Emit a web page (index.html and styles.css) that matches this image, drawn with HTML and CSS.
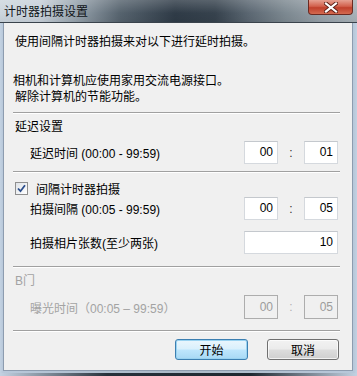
FILE: index.html
```html
<!DOCTYPE html>
<html lang="zh-CN">
<head>
<meta charset="utf-8">
<title>计时器拍摄设置</title>
<link rel="stylesheet" href="styles.css">
</head>
<body>
<div class="window">
  <div class="titlebar">
    <span class="title">计时器拍摄设置</span>
    <div class="close">
      <svg width="14" height="11" viewBox="0 0 14 11">
        <path d="M2 1.5 L12 9.5 M12 1.5 L2 9.5" stroke="#5a1e16" stroke-width="4" stroke-linecap="square"/>
        <path d="M2 1.5 L12 9.5 M12 1.5 L2 9.5" stroke="#ffffff" stroke-width="2.2" stroke-linecap="square"/>
      </svg>
    </div>
  </div>
  <div class="panel">
    <p class="line l1">使用间隔计时器拍摄来对以下进行延时拍摄。</p>
    <p class="line l2">相机和计算机应使用家用交流电源接口。</p>
    <p class="line l3">解除计算机的节能功能。</p>
    <div class="sep s1"></div>
    <p class="line group g1">延迟设置</p>
    <div class="row r1">
      <span class="label">延迟时间 (00:00 - 99:59)</span>
      <div class="pair">
        <span class="box">00</span><span class="colon">:</span><span class="box">01</span>
      </div>
    </div>
    <div class="sep s2"></div>
    <label class="check">
      <span class="cb">
        <svg width="9" height="9" viewBox="0 0 9 9"><path d="M1 4.5 L3.5 7.2 L8 1.2" fill="none" stroke="#2b4e8c" stroke-width="1.8"/></svg>
      </span>
      <span>间隔计时器拍摄</span>
    </label>
    <div class="row r2">
      <span class="label">拍摄间隔 (00:05 - 99:59)</span>
      <div class="pair">
        <span class="box">00</span><span class="colon">:</span><span class="box">05</span>
      </div>
    </div>
    <div class="row r3">
      <span class="label">拍摄相片张数(至少两张)</span>
      <span class="box wide">10</span>
    </div>
    <div class="sep s3"></div>
    <p class="line group g2 disabled">B门</p>
    <div class="row r4 disabled">
      <span class="label">曝光时间（00:05 – 99:59）</span>
      <div class="pair">
        <span class="box off">00</span><span class="colon">:</span><span class="box off">05</span>
      </div>
    </div>
    <div class="sep s4"></div>
    <div class="buttons">
      <button class="btn default">开始</button>
      <button class="btn">取消</button>
    </div>
  </div>
  <div class="shadow"></div>
</div>
</body>
</html>
```
FILE: styles.css
```css
html, body {
  margin: 0;
  padding: 0;
}
body {
  width: 357px;
  height: 376px;
  overflow: hidden;
  font-family: "Liberation Sans", "Noto Sans CJK SC", sans-serif;
  font-size: 12px;
  color: #000;
  background: #2c3540;
}
.window {
  width: 357px;
  height: 376px;
  display: flex;
  flex-direction: column;
  background: linear-gradient(90deg, #c3d2e2 0, #b8c8da 3px, #aab8c6 50%, #b8c8da calc(100% - 3px), #c3d2e2 100%);
}
.titlebar {
  height: 22px;
  flex: none;
  display: flex;
  justify-content: space-between;
  align-items: flex-start;
  background:
    linear-gradient(180deg, rgba(255,255,255,0.18) 0, rgba(255,255,255,0) 60%, rgba(0,0,0,0.05) 100%),
    linear-gradient(90deg, #cdd6de 0, #c7d0d9 40px, #98a4ae 75px, #56636e 120px, #2f3b47 175px, #36424d 215px, #5c6873 250px, #7c8890 285px, #96a0a8 320px, #a9b2b9 357px);
  border-bottom: 1px solid #3a434c;
}
.title {
  padding: 4px 0 0 4px;
  line-height: 14px;
  font-family: "Noto Sans CJK SC", sans-serif;
  font-size: 12px;
  color: #101418;
}
.close {
  width: 45px;
  height: 15px;
  margin-right: 4px;
  box-sizing: border-box;
  border: 1px solid #6b2a22;
  border-top: none;
  border-radius: 0 0 4px 4px;
  background: linear-gradient(180deg, #e6a192 0, #d2614d 45%, #c0402c 55%, #d46a50 100%);
  display: flex;
  align-items: center;
  justify-content: center;
}
.panel {
  flex: none;
  height: 348px;
  margin: 0 4px 0 3px;
  box-sizing: border-box;
  border: 1px solid #8d9caf;
  border-top: none;
  background: #f0f0f0;
  display: flex;
  flex-direction: column;
}
.shadow {
  flex: 1;
  margin-top: 2px;
  background: linear-gradient(90deg, #c3d2e2 0, #27313b 30%, #1e2730 70%, #c3d2e2 100%);
}
.line {
  margin: 0;
  height: 16px;
  line-height: 16px;
  white-space: nowrap;
}
.l1 { margin-top: 11px; padding-left: 11px; }
.l2 { margin-top: 23px; padding-left: 9px; }
.l3 { padding-left: 11px; }
.sep {
  height: 0;
  border-top: 1px solid #a0a0a0;
  border-bottom: 1px solid #ffffff;
  margin-left: 9px;
  margin-right: 12px;
}
.s1 { margin-top: 7px; }
.s2 { margin-top: 7px; }
.s3 { margin-top: 12px; }
.s4 { margin-top: 11px; }
.group { padding-left: 11px; }
.g1 { margin-top: 5px; }
.g2 { margin-top: 5px; }
.row {
  display: flex;
  align-items: center;
  justify-content: space-between;
  padding-left: 26px;
  padding-right: 14px;
  height: 23px;
}
.r1 { margin-top: 6px; }
.r2 { margin-top: 1px; }
.r3 { margin-top: 11px; }
.r4 { margin-top: 6px; height: 24px; }
.label { white-space: nowrap; }
.pair {
  display: flex;
  align-items: center;
}
.box {
  box-sizing: border-box;
  width: 34px;
  height: 23px;
  border: 1px solid #d5d9de;
  border-top-color: #c4c8cd;
  background: #ffffff;
  text-align: right;
  padding-right: 4px;
  line-height: 21px;
}
.box.wide { width: 94px; }
.box.off {
  height: 24px;
  line-height: 22px;
  background: #f0f0f0;
  border-color: #adadad;
  color: #9c9c9c;
}
.colon {
  width: 26px;
  text-align: center;
  color: #333;
}
.disabled { color: #a3a3a3; }
.disabled .colon { color: #b0b0b0; }
.check {
  display: flex;
  align-items: center;
  margin-top: 7px;
  height: 16px;
  padding-left: 11px;
}
.cb {
  box-sizing: border-box;
  width: 13px;
  height: 13px;
  border: 1px solid #8f8f8f;
  background: linear-gradient(135deg, #dfe3e8 0, #ffffff 100%);
  margin-right: 8px;
  display: flex;
  align-items: center;
  justify-content: center;
}
.buttons {
  display: flex;
  justify-content: flex-end;
  gap: 19px;
  margin-top: 7px;
  padding-right: 13px;
}
.btn {
  box-sizing: border-box;
  width: 73px;
  height: 21px;
  padding: 0;
  font-family: "Noto Sans CJK SC", sans-serif;
  font-size: 12px;
  color: #000;
  border: 1px solid #707070;
  border-radius: 3px;
  background: linear-gradient(180deg, #f2f2f2 0, #ebebeb 48%, #dddddd 52%, #cfcfcf 100%);
  box-shadow: inset 0 0 0 1px rgba(255,255,255,0.7);
}
.btn + .btn { width: 72px; }
.btn.default {
  border-color: #3c7fb1;
  background: linear-gradient(180deg, #eaf6fd 0, #d9f0fc 48%, #bee6fd 52%, #a7d9f5 100%);
  box-shadow: inset 0 0 0 1px #9ad3f1;
}
```
